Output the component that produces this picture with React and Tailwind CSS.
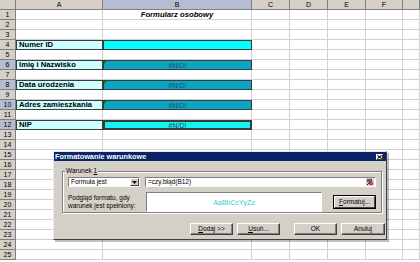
import React from 'react'

const cols = [
  { key: 'A', w: 'w-[87px]' },
  { key: 'B', w: 'w-[149px]' },
  { key: 'C', w: 'w-[38px]' },
  { key: 'D', w: 'w-[38px]' },
  { key: 'E', w: 'w-[38px]' },
  { key: 'F', w: 'w-[37px]' },
  { key: '', w: 'flex-1' },
]

const labels = {
  4: 'Numer ID',
  6: 'Imię i Nazwisko',
  8: 'Data urodzenia',
  10: 'Adres zamieszkania',
  12: 'NIP',
}

const selectedRows = [6, 8, 10, 12]

function ColumnHeader() {
  return (
    <div className="flex h-[10px]">
      <div className="w-[16px] bg-[#d4d0c8] border-r border-b border-[#808080]" />
      {cols.map((c) => (
        <div
          key={c.key || 'g'}
          className={`${c.w} border-r border-b border-[#808080] flex items-center justify-center text-[7px] leading-none ${
            c.key === 'B' ? 'bg-[#b6bdd2]' : 'bg-[#d4d0c8]'
          }`}
        >
          {c.key}
        </div>
      ))}
    </div>
  )
}

function Row({ n }) {
  const label = labels[n]
  const sel = selectedRows.includes(n)
  let bCls = 'bg-white border-r border-b border-[#d0d0d0]'
  let bText = ''
  if (n === 4) bCls = 'bg-[#00ffff] border border-[#3a3a3a]'
  if (n === 6 || n === 8 || n === 10) {
    bCls = 'bg-[#0aa7c4] border border-[#3a3a3a]'
    bText = '#N/D!'
  }
  if (n === 12) {
    bCls = 'bg-[#16f2f2] border-2 border-[#3a3a3a]'
    bText = '#N/D!'
  }
  return (
    <div className="flex h-[10px]">
      <div
        className={`w-[16px] border-r border-b border-[#808080] flex items-center justify-center text-[7px] leading-none ${
          sel ? 'bg-[#b6bdd2]' : 'bg-[#d4d0c8]'
        }`}
      >
        {n}
      </div>
      <div
        className={`w-[87px] flex items-center pl-[2px] text-[7.7px] font-bold leading-none ${
          label ? 'bg-[#ccffff] border border-[#3a3a3a]' : 'bg-white border-r border-b border-[#d0d0d0]'
        }`}
      >
        {label}
      </div>
      <div className={`w-[149px] relative flex items-center justify-center text-[7px] leading-none text-[#1f4f5a] ${bCls}`}>
        {(n === 6 || n === 8 || n === 10) && (
          <div className="absolute left-0 top-0 w-0 h-0 border-t-[3px] border-r-[3px] border-t-[#008000] border-r-transparent" />
        )}
        {n === 1 ? <span className="font-bold italic text-black text-[7.7px]">Formularz osobowy</span> : bText}
      </div>
      {cols.slice(2).map((c) => (
        <div key={c.key || 'g'} className={`${c.w} bg-white border-r border-b border-[#d0d0d0]`} />
      ))}
    </div>
  )
}

function Btn({ children, w }) {
  return (
    <div
      className={`${w} h-[12px] flex items-center justify-center bg-[#d4d0c8] text-[6.5px] leading-none border border-t-white border-l-white border-r-[#404040] border-b-[#404040] shadow-[inset_-1px_-1px_0_#808080]`}
    >
      {children}
    </div>
  )
}

function Dialog() {
  return (
    <div className="absolute left-[53px] top-[151px] w-[334px] h-[89px] bg-[#d4d0c8] border border-t-[#e8e8e8] border-l-[#e8e8e8] border-r-[#404040] border-b-[#404040] shadow-[2px_2px_0_rgba(0,0,0,0.25)] flex flex-col">
      <div className="h-[9px] bg-[#0a246a] flex items-center justify-between pl-[1px] pr-[3px]">
        <span className="text-white font-bold text-[7.3px] leading-none">Formatowanie warunkowe</span>
        <div className="w-[7px] h-[6px] bg-[#d4d0c8] border border-t-white border-l-white border-r-[#404040] border-b-[#404040] flex items-center justify-center">
          <svg width="5" height="4" viewBox="0 0 5 4">
            <path d="M0.5 0.5 L4.5 3.5 M4.5 0.5 L0.5 3.5" stroke="black" strokeWidth="1" />
          </svg>
        </div>
      </div>
      <div className="relative mt-[10px] ml-[8px] mr-[4px] h-[42px] border border-[#808080] shadow-[1px_1px_0_white,inset_1px_1px_0_white] px-[5px] pt-[4px] flex flex-col gap-[5px]">
        <span className="absolute left-[2px] -top-[4px] bg-[#d4d0c8] px-[1px] text-[6.5px] leading-none">
          Warunek <span className="underline">1</span>
        </span>
        <div className="flex gap-[5px] h-[11px] mt-[1px]">
          <div className="w-[73px] bg-white border border-t-[#808080] border-l-[#808080] border-r-white border-b-white flex items-center justify-between">
            <span className="text-[6.5px] leading-none pl-[2px]">Formuła jest</span>
            <div className="w-[9px] h-full bg-[#d4d0c8] border border-t-white border-l-white border-r-[#404040] border-b-[#404040] flex items-center justify-center">
              <svg width="5" height="3" viewBox="0 0 5 3">
                <path d="M0 0 L5 0 L2.5 3 Z" fill="black" />
              </svg>
            </div>
          </div>
          <div className="w-[234px] bg-white border border-t-[#808080] border-l-[#808080] border-r-white border-b-white flex items-center justify-between">
            <span className="text-[6.5px] leading-none pl-[2px]">=czy.błąd(B12)</span>
            <svg width="8" height="8" viewBox="0 0 8 8" className="mr-[1px]">
              <rect x="0" y="0" width="8" height="8" fill="#d4d0c8" />
              <rect x="1" y="1" width="5" height="3" fill="#7a4a6a" />
              <rect x="3" y="4" width="4" height="3" fill="#c04070" />
              <path d="M1 7 L4 4" stroke="#202020" strokeWidth="1" />
            </svg>
          </div>
        </div>
        <div className="flex items-start h-[20px]">
          <div className="w-[78px] text-[6.5px] leading-[8px] pt-[2px]">
            Podgląd formatu, gdy
            <br />
            warunek jest spełniony:
          </div>
          <div className="w-[177px] h-[20px] bg-white border border-t-[#808080] border-l-[#808080] border-r-white border-b-white flex items-center justify-center">
            <span className="text-[7px] leading-none text-[#33cccc]">AaBbCcYyZz</span>
          </div>
          <div className="ml-[11px] mt-[3px] w-[43px] h-[14px] border border-black flex">
            <div className="flex-1 flex items-center justify-center bg-[#d4d0c8] text-[6.5px] leading-none border border-t-white border-l-white border-r-[#404040] border-b-[#404040]">
              <span>
                <span className="underline">F</span>ormatuj...
              </span>
            </div>
          </div>
        </div>
      </div>
      <div className="flex mt-[10px] ml-[136px] gap-[4px]">
        <Btn w="w-[43px]">
          <span><span className="underline">D</span>odaj &gt;&gt;</span>
        </Btn>
        <Btn w="w-[43px]">
          <span><span className="underline">U</span>suń...</span>
        </Btn>
        <div className="w-[6px]" />
        <Btn w="w-[43px]">OK</Btn>
        <Btn w="w-[44px]">Anuluj</Btn>
      </div>
    </div>
  )
}

export default function App() {
  const rows = Array.from({ length: 25 }, (_, i) => i + 1)
  return (
    <div
      className="relative w-[420px] h-[262px] overflow-hidden bg-white"
      style={{ fontFamily: '"Liberation Sans", Arial, sans-serif' }}
    >
      <ColumnHeader />
      {rows.map((n) => (
        <Row key={n} n={n} />
      ))}
      <Dialog />
    </div>
  )
}
